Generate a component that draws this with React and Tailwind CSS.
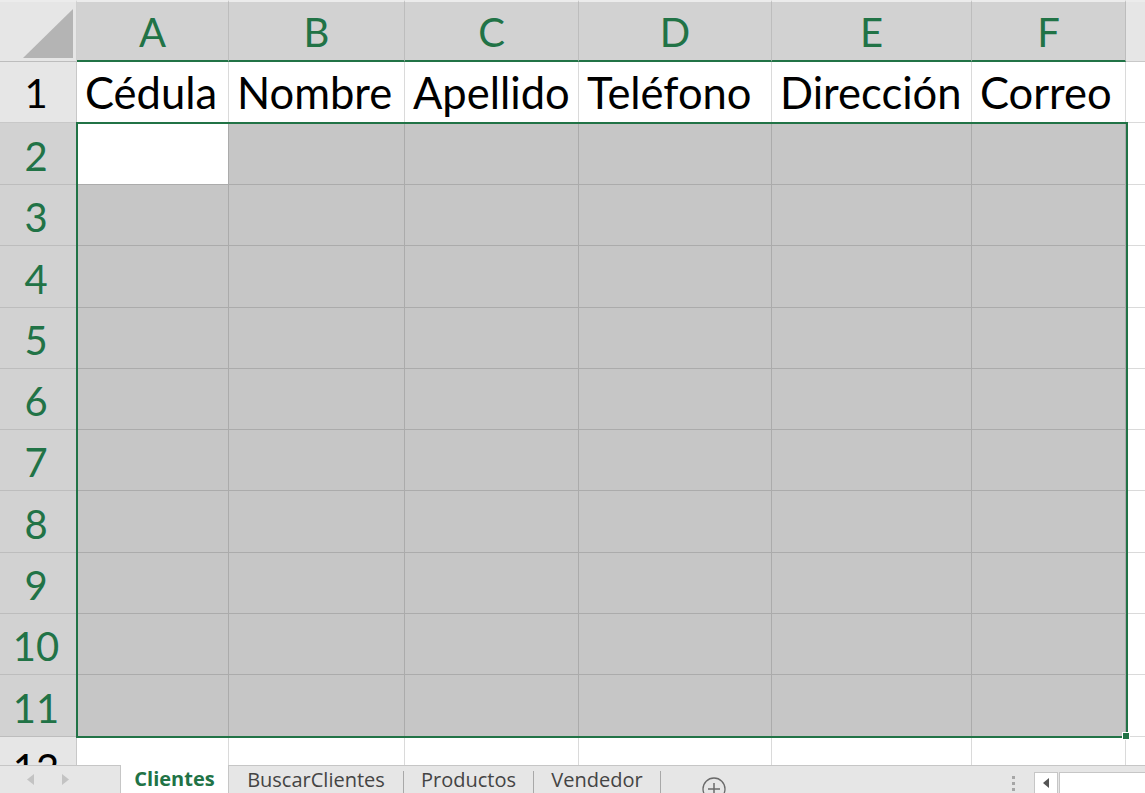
import React from 'react';

const columns = [
  { key: 'A', label: 'Cédula' },
  { key: 'B', label: 'Nombre' },
  { key: 'C', label: 'Apellido' },
  { key: 'D', label: 'Teléfono' },
  { key: 'E', label: 'Dirección' },
  { key: 'F', label: 'Correo' },
];

const selectedRows = [2, 3, 4, 5, 6, 7, 8, 9, 10, 11];

function Corner() {
  return (
    <div className="bg-[#e6e6e6] border-t-2 border-t-[#ececec] border-r border-r-[#d0d0d0] border-b border-b-[#bdbdbd] relative">
      <svg className="absolute left-[22px] top-[6px]" width="52" height="50" viewBox="0 0 52 50">
        <polygon points="1,50 51,50 51,1" fill="#b4b4b4" />
      </svg>
    </div>
  );
}

function ColHeader({ letter }) {
  return (
    <div className="bg-[#d2d2d2] border-t-2 border-t-[#ececec] border-r border-r-[#bdbdbd] border-b-2 border-b-[#217346] flex items-end justify-center pb-[8px]">
      <span className="text-[40px] leading-none text-[#217346]">{letter}</span>
    </div>
  );
}

function RowHeader({ n, selected }) {
  return (
    <div
      className={
        selected
          ? 'bg-[#d2d2d2] border-r border-r-[#217346] border-b border-b-[#bdbdbd] flex items-end justify-center pb-[8px] pr-[4px]'
          : 'bg-[#e6e6e6] border-r border-r-[#c8c8c8] border-b border-b-[#c8c8c8] flex items-start justify-center pt-[11px] pr-[4px]'
      }
    >
      <span className={selected ? 'text-[40px] leading-none text-[#217346]' : 'text-[40px] leading-none text-black'}>
        {n}
      </span>
    </div>
  );
}

export default function App() {
  return (
    <div className="w-[1145px] h-[793px] overflow-hidden flex flex-col bg-white font-['Lato',sans-serif]">
      <div className="relative flex-1 overflow-hidden">
        <div className="grid grid-cols-[77px_152px_176px_174px_193px_200px_154px_1fr] grid-rows-[62px_61px_62px_61px_62px_61px_61px_61px_62px_61px_61px_62px_61px]">
          {/* column headers */}
          <Corner />
          {columns.map((c) => (
            <ColHeader key={c.key} letter={c.key} />
          ))}
          <div className="bg-[#e6e6e6] border-t-2 border-t-[#ececec] border-b border-b-[#c8c8c8]" />

          {/* row 1: field names */}
          <RowHeader n={1} selected={false} />
          {columns.map((c) => (
            <div
              key={c.key}
              className="bg-white border-r border-r-[#dadada] border-b border-b-[#dadada] flex items-end pl-[8px] pb-[8px] overflow-hidden whitespace-nowrap"
            >
              <span className="text-[43.5px] leading-none text-black">{c.label}</span>
            </div>
          ))}
          <div className="bg-white border-b border-b-[#dadada]" />

          {/* rows 2-11: selection */}
          {selectedRows.map((r) => (
            <React.Fragment key={r}>
              <RowHeader n={r} selected />
              {columns.map((c) => (
                <div
                  key={c.key}
                  className={
                    r === 2 && c.key === 'A'
                      ? 'bg-white border-r border-r-[#ababab] border-b border-b-[#ababab]'
                      : 'bg-[#c6c6c6] border-r border-r-[#ababab] border-b border-b-[#ababab]'
                  }
                />
              ))}
              <div className="bg-white border-b border-b-[#dadada]" />
            </React.Fragment>
          ))}

          {/* row 12 */}
          <RowHeader n={12} selected={false} />
          {columns.map((c) => (
            <div key={c.key} className="bg-white border-r border-r-[#dadada] border-b border-b-[#dadada]" />
          ))}
          <div className="bg-white" />
        </div>

        {/* selection outline */}
        <div className="absolute left-[76px] top-[122px] w-[1052px] h-[616px] border-2 border-[#217346] pointer-events-none" />
        <div className="absolute left-[1122px] top-[732px] w-[8px] h-[8px] bg-[#217346] border border-white" />
      </div>

      {/* sheet tabs */}
      <div className="h-[28px] flex bg-[#e6e6e6] font-['Open_Sans',sans-serif] text-[20px] leading-none">
        <div className="w-[121px] border-t border-t-[#c6c6c6] border-r border-r-[#c6c6c6] flex items-center">
          <svg className="ml-[27px]" width="7" height="11" viewBox="0 0 7 11">
            <polygon points="7,0 7,11 0,5.5" fill="#c3c3c3" />
          </svg>
          <svg className="ml-[28px]" width="7" height="11" viewBox="0 0 7 11">
            <polygon points="0,0 0,11 7,5.5" fill="#c3c3c3" />
          </svg>
        </div>
        <div className="w-[108px] bg-white border-r border-r-[#c6c6c6] flex items-center justify-center">
          <span className="font-bold text-[#217346]">Clientes</span>
        </div>
        <div className="flex-1 flex border-t border-t-[#c6c6c6]">
          <div className="w-[174px] flex items-center justify-center text-[#444]">BuscarClientes</div>
          <div className="w-px h-[22px] self-end bg-[#a8a8a8]" />
          <div className="w-[129px] flex items-center justify-center text-[#444]">Productos</div>
          <div className="w-px h-[22px] self-end bg-[#a8a8a8]" />
          <div className="w-[126px] flex items-center justify-center text-[#444]">Vendedor</div>
          <div className="w-px h-[22px] self-end bg-[#a8a8a8]" />
          <div className="w-[105px] flex items-end justify-center">
            <svg width="26" height="24" viewBox="0 0 26 24" className="translate-y-[8px]">
              <circle cx="13" cy="12" r="11" fill="none" stroke="#6a6a6a" strokeWidth="1.3" />
              <line x1="13" y1="6" x2="13" y2="18" stroke="#6a6a6a" strokeWidth="1.5" />
              <line x1="7" y1="12" x2="19" y2="12" stroke="#6a6a6a" strokeWidth="1.5" />
            </svg>
          </div>
          <div className="flex-1" />
          <div className="w-[20px] flex flex-col items-center justify-end gap-[3px] pb-[2px]">
            <div className="w-[3px] h-[3px] bg-[#a6a6a6]" />
            <div className="w-[3px] h-[3px] bg-[#a6a6a6]" />
            <div className="w-[3px] h-[3px] bg-[#a6a6a6]" />
          </div>
          <div className="w-[11px]" />
          <div className="flex self-end h-[21px]">
            <div className="w-[24px] bg-white border border-[#c6c6c6] border-b-0 flex items-center justify-center">
              <svg width="6" height="10" viewBox="0 0 6 10">
                <polygon points="6,0 6,10 0,5" fill="#555" />
              </svg>
            </div>
            <div className="w-[86px] ml-px bg-white border border-[#c6c6c6] border-b-0 border-r-0" />
          </div>
        </div>
      </div>
    </div>
  );
}
